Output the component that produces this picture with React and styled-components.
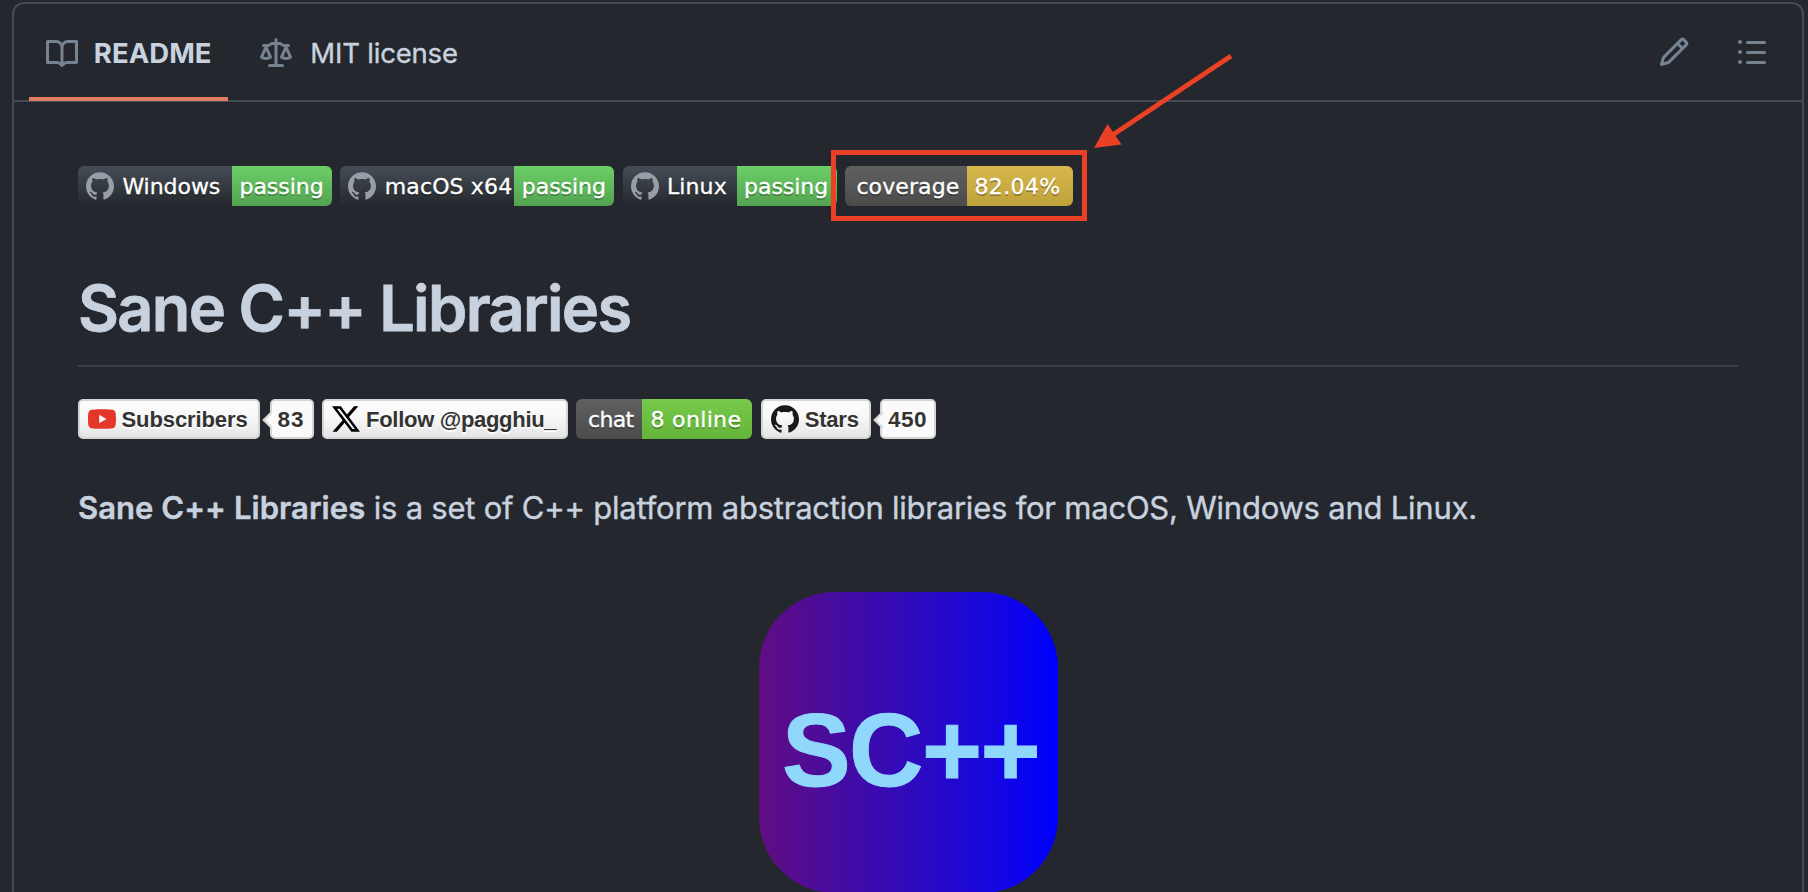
import React from 'react';
import styled, { createGlobalStyle, css } from 'styled-components';
import { SiGithub, SiX, SiYoutube } from 'react-icons/si';

const GlobalStyle = createGlobalStyle`
  * { box-sizing: border-box; }
  html, body { margin: 0; background: #24272e; }
  body { font-family: Inter, "Liberation Sans", sans-serif; color: #c8d2df; }
`;

const Page = styled.main`
  position: relative;
  height: 892px;
  overflow: hidden;
  padding: 2px 4px 0 12px;
  background: #24272e;
`;

const Frame = styled.article`
  height: 940px;
  border: 2px solid #444b54;
  border-radius: 12px;
`;

const Header = styled.header`
  display: flex;
  height: 98px;
  padding: 0 34px 0 15.4px;
  justify-content: space-between;
  border-bottom: 2px solid #444b54;
`;

const Tabs = styled.nav`
  display: flex;
  gap: 16px;
`;

const Tab = styled.a`
  display: flex;
  align-items: flex-start;
  gap: ${p => (p.$active ? 16 : 18)}px;
  height: 97px;
  padding: 34px 16.4px 0;
  font-size: 27.5px;
  line-height: 30px;
  font-weight: ${p => (p.$active ? 700 : 400)};
  letter-spacing: ${p => (p.$active ? '0.05px' : '-0.2px')};
  -webkit-text-stroke: ${p => (p.$active ? 0 : '0.35px')};
  border-bottom: 4px solid ${p => (p.$active ? '#e07e64' : 'transparent')};
`;

const Octicon = styled.svg`
  width: 32px;
  height: 32px;
  flex: none;
  fill: #768390;
`;

const Tools = styled.div`
  display: flex;
  gap: 46px;
  padding-top: 32px;
`;

const Body = styled.section`
  padding: 64px 64px 0;
`;

const BadgeRow = styled.div`
  display: flex;
  gap: 8.3px;
  height: 40px;
`;

const Badge = styled.span`
  display: flex;
  width: ${p => p.$width}px;
  flex: none;
  border-radius: 6px;
  overflow: hidden;
  font: 22px/38px "DejaVu Sans", Verdana, sans-serif;
  color: #fff;
  text-shadow: 0 2px 0 rgba(1, 1, 1, 0.3);
  -webkit-text-stroke: 0.3px #fff;
  white-space: nowrap;
`;

const tones = {
  slate: ['#464d56', '#24282d'],
  gray: ['#606060', '#4b4b4b'],
  green: ['#6bcf67', '#53a350'],
  yellow: ['#d6b84d', '#bfa13b'],
  lime: ['#78ca4c', '#63b439'],
};

const BadgePart = styled.span`
  display: flex;
  align-items: center;
  width: ${p => (p.$width ? `${p.$width}px` : 'auto')};
  flex: ${p => (p.$width ? 'none' : 1)};
  padding-left: ${p => p.$pad}px;
  letter-spacing: ${p => p.$track || 0}px;
  background: linear-gradient(${p => tones[p.$tone].join(', ')});
`;

const Label = styled.span`
  padding-top: 2px;
`;

const MarkIcon = styled(SiGithub)`
  width: 28px;
  height: 28px;
  margin-right: 8.4px;
  flex: none;
  color: #979ea8;
`;

const Title = styled.h1`
  margin: 61px 0 32px;
  height: 100px;
  padding-top: 1px;
  border-bottom: 2px solid #3a3f47;
  font-size: 63px;
  line-height: 80px;
  font-weight: 600;
  letter-spacing: -1.64px;
  -webkit-text-stroke: 0.8px #c8d2df;
`;

const buttonFace = css`
  display: flex;
  align-items: center;
  flex: none;
  height: 40px;
  border: 2px solid #d5d5d5;
  border-radius: 5px;
  font: bold 22px/34px "Liberation Sans", Arial, sans-serif;
  color: #333;
  text-shadow: 0 2px 0 #fff;
  white-space: nowrap;
`;

const SocialButton = styled.span`
  ${buttonFace}
  width: ${p => p.$width}px;
  padding-left: 8px;
  gap: ${p => p.$gap}px;
  letter-spacing: ${p => p.$track}px;
  background: linear-gradient(#fcfcfc, #f8f8f8 45%, #e5e5e5);
  svg { width: 28px; height: 28px; flex: none; }
`;

const Count = styled.span`
  ${buttonFace}
  position: relative;
  width: ${p => p.$width}px;
  margin-left: 1.5px;
  padding-left: 5.6px;
  font-size: 22.5px;
  letter-spacing: ${p => p.$track}px;
  background: #fafafa;
  &::before {
    content: "";
    position: absolute;
    left: -6.5px;
    top: 13px;
    width: 10px;
    height: 10px;
    background: #fafafa;
    border: solid #d5d5d5;
    border-width: 0 0 2px 2px;
    transform: rotate(45deg);
  }
`;

const Intro = styled.p`
  margin: 45px 0 0;
  font-size: 31px;
  line-height: 48px;
  letter-spacing: -0.225px;
  white-space: nowrap;
  -webkit-text-stroke: 0.4px #c8d2df;
  strong { font-weight: 600; letter-spacing: 0.05px; }
`;

const Logo = styled.div`
  width: 299px;
  height: 301px;
  margin: 60px auto 0;
  padding: 17px 0 0 23.5px;
  border-radius: 76px;
  background: linear-gradient(90deg, #610d82, #4a0c9c 22%, #300abb 50%, #1907dc 75%, #0000fa 98%);
  font: bold 103px/283px "Liberation Sans", Arial, sans-serif;
  letter-spacing: -1.6px;
  color: #90d7fc;
  -webkit-text-stroke: 1px #90d7fc;
`;

const Highlight = styled.div`
  position: absolute;
  left: 831px;
  top: 150px;
  width: 256px;
  height: 71px;
  border: 5px solid #ea4025;
`;

const Arrow = styled.svg`
  position: absolute;
  left: 1090px;
  top: 50px;
  width: 146px;
  height: 100px;
`;

const paths = {
  book: 'M0 1.75A.75.75 0 0 1 .75 1h4.253c1.227 0 2.317.59 3 1.501A3.743 3.743 0 0 1 11.006 1h4.245a.75.75 0 0 1 .75.75v10.5a.75.75 0 0 1-.75.75h-4.507a2.25 2.25 0 0 0-1.591.659l-.622.621a.75.75 0 0 1-1.06 0l-.622-.621A2.25 2.25 0 0 0 5.258 13H.75a.75.75 0 0 1-.75-.75Zm7.251 10.324.004-5.073-.002-2.253A2.25 2.25 0 0 0 5.003 2.5H1.5v9h3.757a3.75 3.75 0 0 1 1.994.574ZM8.755 4.75l-.004 7.322a3.752 3.752 0 0 1 1.992-.572H14.5v-9h-3.495a2.25 2.25 0 0 0-2.25 2.25Z',
  law: 'M8.75.75V2h.985c.304 0 .603.08.867.231l1.29.736c.038.022.08.033.124.033h2.234a.75.75 0 0 1 0 1.5h-.427l2.111 4.692a.75.75 0 0 1-.154.838l-.53-.53.529.531-.001.002-.002.002-.006.006-.006.005-.01.01-.045.04c-.21.176-.441.327-.686.45C14.556 10.78 13.88 11 13 11a4.498 4.498 0 0 1-2.023-.454 3.544 3.544 0 0 1-.686-.45l-.045-.04-.016-.015-.006-.006-.004-.004v-.001a.75.75 0 0 1-.154-.838L12.178 4.5h-.162c-.305 0-.604-.079-.868-.231l-1.29-.736a.245.245 0 0 0-.124-.033H8.75V13h2.5a.75.75 0 0 1 0 1.5h-6.5a.75.75 0 0 1 0-1.5h2.5V3.5h-.984a.245.245 0 0 0-.124.033l-1.289.737c-.265.15-.564.23-.869.23h-.162l2.112 4.692a.75.75 0 0 1-.154.838l-.53-.53.529.531-.001.002-.002.002-.006.006-.016.015-.045.04c-.21.176-.441.327-.686.45C4.556 10.78 3.88 11 3 11a4.498 4.498 0 0 1-2.023-.454 3.544 3.544 0 0 1-.686-.45l-.045-.04-.016-.015-.006-.006-.004-.004v-.001a.75.75 0 0 1-.154-.838L2.178 4.5H1.75a.75.75 0 0 1 0-1.5h2.234a.249.249 0 0 0 .125-.033l1.288-.737c.265-.15.564-.23.869-.23h.984V.75a.75.75 0 0 1 1.5 0Zm2.945 8.477c.285.135.718.273 1.305.273s1.02-.138 1.305-.273L13 6.327Zm-10 0c.285.135.718.273 1.305.273s1.02-.138 1.305-.273L3 6.327Z',
  pencil: 'M11.013 1.427a1.75 1.75 0 0 1 2.474 0l1.086 1.086a1.75 1.75 0 0 1 0 2.474l-8.61 8.61c-.21.21-.47.364-.756.445l-3.251.93a.75.75 0 0 1-.927-.928l.929-3.25c.081-.286.235-.547.445-.758l8.61-8.61Zm.176 4.823L9.75 4.81l-6.286 6.287a.253.253 0 0 0-.064.108l-.558 1.953 1.953-.558a.253.253 0 0 0 .108-.064Zm1.238-3.763a.25.25 0 0 0-.354 0L10.811 3.75l1.439 1.44 1.263-1.263a.25.25 0 0 0 0-.354Z',
  list: 'M5.75 2.5h8.5a.75.75 0 0 1 0 1.5h-8.5a.75.75 0 0 1 0-1.5Zm0 5h8.5a.75.75 0 0 1 0 1.5h-8.5a.75.75 0 0 1 0-1.5Zm0 5h8.5a.75.75 0 0 1 0 1.5h-8.5a.75.75 0 0 1 0-1.5ZM2 14a1 1 0 1 1 0-2 1 1 0 0 1 0 2Zm1-6a1 1 0 1 1-2 0 1 1 0 0 1 2 0ZM2 4a1 1 0 1 1 0-2 1 1 0 0 1 0 2Z',
};

const Icon = ({ name }) => (
  <Octicon viewBox="0 0 16 16" aria-hidden="true"><path d={paths[name]} /></Octicon>
);

const workflows = [
  { name: 'Windows', track: -0.05, width: 254, label: 154 },
  { name: 'macOS x64', track: 0.15, width: 274, label: 174 },
  { name: 'Linux', track: 0.1, width: 214, label: 114 },
];

export default function App() {
  return (
    <Page>
      <GlobalStyle />
      <Frame>
        <Header>
          <Tabs>
            <Tab $active><Icon name="book" />README</Tab>
            <Tab><Icon name="law" />MIT license</Tab>
          </Tabs>
          <Tools>
            <Icon name="pencil" />
            <Icon name="list" />
          </Tools>
        </Header>
        <Body>
          <BadgeRow>
            {workflows.map(w => (
              <Badge key={w.name} $width={w.width}>
                <BadgePart $tone="slate" $width={w.label} $pad={8} $track={w.track}><MarkIcon /><Label>{w.name}</Label></BadgePart>
                <BadgePart $tone="green" $pad={7.5} $track={-0.05}><Label>passing</Label></BadgePart>
              </Badge>
            ))}
            <Badge $width={228}>
              <BadgePart $tone="gray" $width={122} $pad={11.5} $track={0.1}><Label>coverage</Label></BadgePart>
              <BadgePart $tone="yellow" $pad={7.5} $track={0.4}><Label>82.04%</Label></BadgePart>
            </Badge>
          </BadgeRow>
          <Title>Sane C++ Libraries</Title>
          <BadgeRow>
            <SocialButton $width={182} $gap={5.5} $track={-0.1}><SiYoutube color="#e43629" /><Label>Subscribers</Label></SocialButton>
            <Count $width={44} $track={1}><Label>83</Label></Count>
            <SocialButton $width={246} $gap={6} $track={-0.3}><SiX color="#000" /><Label>Follow @pagghiu_</Label></SocialButton>
            <Badge $width={176}>
              <BadgePart $tone="gray" $width={66} $pad={11.5} $track={-0.6}><Label>chat</Label></BadgePart>
              <BadgePart $tone="lime" $pad={8} $track={0.35}><Label>8 online</Label></BadgePart>
            </Badge>
            <SocialButton $width={110} $gap={6} $track={-0.2}><SiGithub color="#1b1817" /><Label>Stars</Label></SocialButton>
            <Count $width={56} $track={0.5}><Label>450</Label></Count>
          </BadgeRow>
          <Intro>
            <strong>Sane C++ Libraries</strong> is a set of C++ platform abstraction libraries for macOS, Windows and Linux.
          </Intro>
          <Logo>SC++</Logo>
        </Body>
      </Frame>
      <Highlight />
      <Arrow viewBox="0 0 146 100" aria-hidden="true">
        <path d="M141 6 24 84" stroke="#ea4025" strokeWidth="5" />
        <path d="M4 98 17.5 74 31.5 94.5Z" fill="#ea4025" />
      </Arrow>
    </Page>
  );
}
